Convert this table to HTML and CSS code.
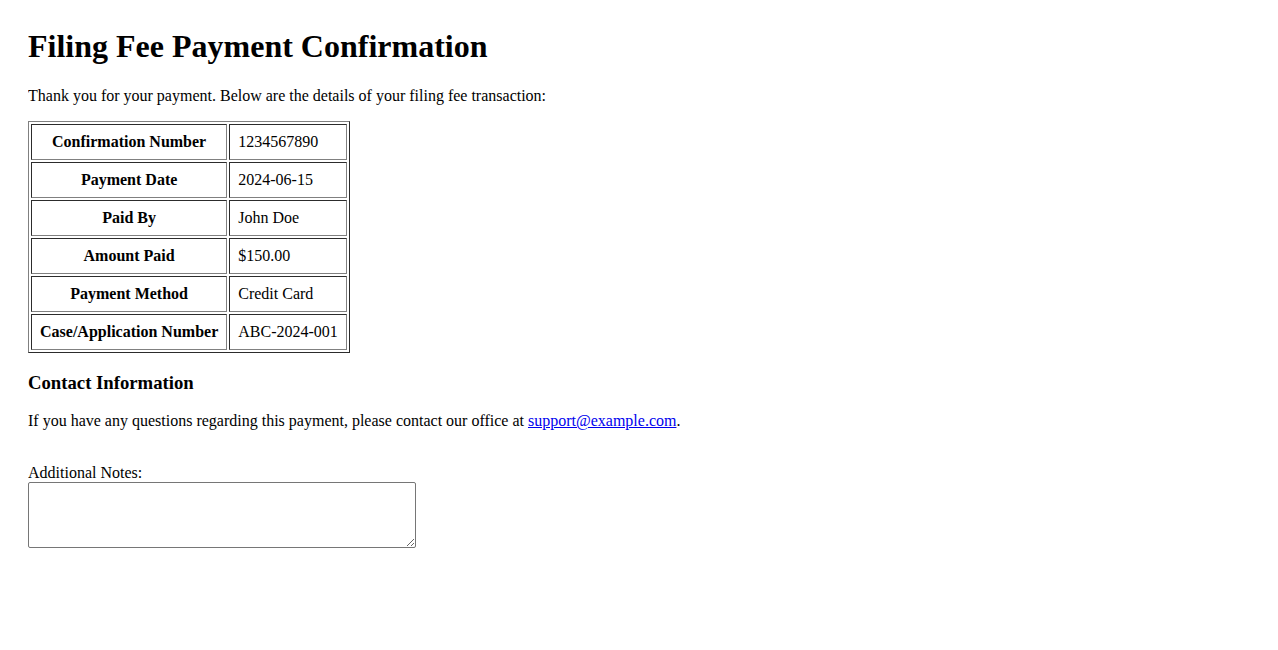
FILE: index.html
```html
<!DOCTYPE html>
<html lang="en">
<head>
<meta charset="utf-8">
<title>Filing Fee Payment Confirmation</title>
<link rel="stylesheet" href="styles.css">
</head>
<body>
<h1 class="title">Filing Fee Payment Confirmation</h1>
<p>Thank you for your payment. Below are the details of your filing fee transaction:</p>
<table class="details">
  <tr><th>Confirmation Number</th><td>1234567890</td></tr>
  <tr><th>Payment Date</th><td>2024-06-15</td></tr>
  <tr><th>Paid By</th><td>John Doe</td></tr>
  <tr><th>Amount Paid</th><td>$150.00</td></tr>
  <tr><th>Payment Method</th><td>Credit Card</td></tr>
  <tr><th>Case/Application Number</th><td>ABC-2024-001</td></tr>
</table>
<h3 class="section">Contact Information</h3>
<p>If you have any questions regarding this payment, please contact our office at <a href="#">support@example.com</a>.</p>
<div class="notes">
  <label for="notes">Additional Notes:</label><br>
  <textarea id="notes" class="notes-box" rows="4"></textarea>
</div>
</body>
</html>
```
FILE: styles.css
```css
body {
  margin: 28px;
  font-family: "Liberation Serif", "Times New Roman", serif;
  font-size: 16px;
  color: #000;
  background: #fff;
}
.title {
  font-size: 32px;
  margin: 0 0 22px;
}
p {
  margin: 16px 0;
}
.details {
  border: 1px outset #808080;
  border-spacing: 2px;
}
.details th,
.details td {
  border: 1px inset #808080;
  padding: 8px;
}
.details th {
  text-align: center;
  font-weight: bold;
}
.details td {
  text-align: left;
}
.section {
  font-size: 18.72px;
  margin: 18.72px 0;
}
a {
  color: #0000ee;
}
.notes {
  margin-top: 34px;
}
.notes-box {
  width: 382px;
  height: 60px;
  padding: 2px;
  border: 1px solid #767676;
  border-radius: 2px;
  font-family: "Liberation Mono", monospace;
  font-size: 13.33px;
  margin: 0;
  vertical-align: bottom;
}
```
